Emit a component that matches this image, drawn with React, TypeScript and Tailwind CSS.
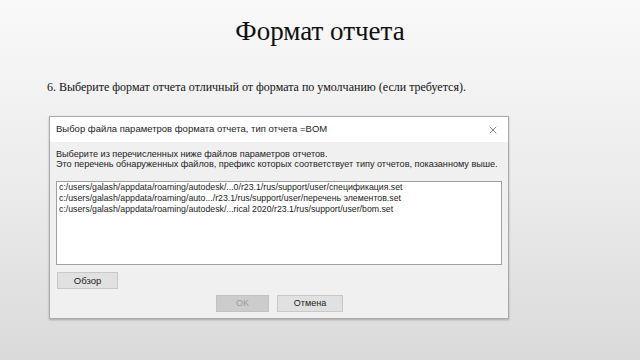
import { X } from 'lucide-react';

const files = [
  'c:/users/galash/appdata/roaming/autodesk/...0/r23.1/rus/support/user/спецификация.set',
  'c:/users/galash/appdata/roaming/auto.../r23.1/rus/support/user/перечень элементов.set',
  'c:/users/galash/appdata/roaming/autodesk/...rical 2020/r23.1/rus/support/user/bom.set',
];

const ui = { fontFamily: '"Liberation Sans", "Noto Sans", sans-serif' };
const serif = { fontFamily: '"Liberation Serif", "DejaVu Serif", serif' };

export default function App() {
  return (
    <div className="w-[640px] h-[360px] overflow-hidden bg-gradient-to-b from-[#f9f9f9] via-[#ececec] to-[#dadada] flex flex-col">
      <h1 className="mt-[14px] text-center text-[27px] leading-[34px] text-[#111]" style={serif}>
        Формат отчета
      </h1>
      <p className="mt-[32px] pl-[47px] text-[12px] leading-[15px] text-[#111]" style={serif}>
        6. Выберите формат отчета отличный от формата по умолчанию (если требуется).
      </p>

      <div
        className="ml-[49px] mt-[21px] w-[460px] h-[203px] border border-[#a9a9a9] bg-[#f0f0f0] shadow-[0_1px_2px_rgba(0,0,0,0.25)] flex flex-col"
        style={ui}
      >
        <div className="h-[25px] shrink-0 bg-white flex items-center justify-between pl-[6px] pr-[9px]">
          <span className="text-[9.5px] text-[#222]">
            Выбор файла параметров формата отчета, тип отчета =BOM
          </span>
          <X className="w-[12px] h-[12px] text-[#333]" strokeWidth={1.2} />
        </div>

        <div className="px-[6px] pt-[7px] text-[9.1px] leading-[10px] text-[#222] whitespace-nowrap">
          <div>Выберите из перечисленных ниже файлов параметров отчетов.</div>
          <div>Это перечень обнаруженных файлов, префикс которых соответствует типу отчетов, показанному выше.</div>
        </div>

        <div className="mx-[6px] mt-[12px] h-[84px] shrink-0 bg-white border border-[#a0a0a0] px-[2px] text-[8.75px] leading-[11px] text-[#222]">
          {files.map((f) => (
            <div key={f} className="whitespace-nowrap">{f}</div>
          ))}
        </div>

        <div className="px-[7px] mt-[7px] flex">
          <button className="block w-[61px] h-[17px] bg-[#e1e1e1] border border-[#c8c8c8] text-[9.5px] leading-[15px] text-[#222]">
            Обзор
          </button>
        </div>

        <div className="mt-[6px] flex justify-center gap-[8px] pl-[1px]">
          <button className="block w-[53px] h-[17px] bg-[#cccccc] border border-[#c2c2c2] text-[9px] leading-[15px] text-[#9a9a9a]">
            OK
          </button>
          <button className="block w-[66px] h-[17px] bg-[#e1e1e1] border border-[#c8c8c8] text-[9px] leading-[15px] text-[#222]">
            Отмена
          </button>
        </div>
      </div>
    </div>
  );
}
